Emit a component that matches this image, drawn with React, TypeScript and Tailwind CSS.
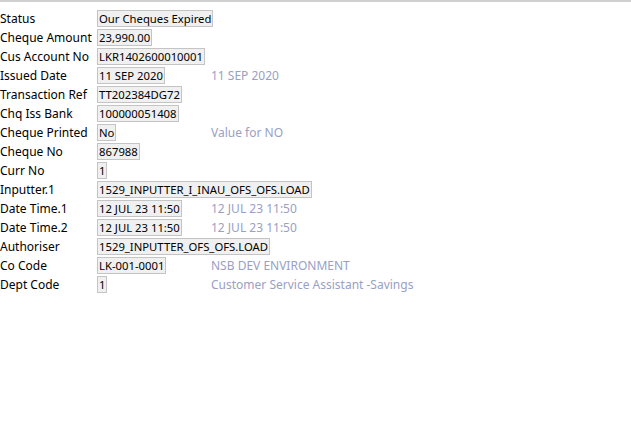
import React from 'react';

interface Field {
  label: string;
  value: string;
  desc?: string;
}

const fields: Field[] = [
  { label: 'Status', value: 'Our Cheques Expired' },
  { label: 'Cheque Amount', value: '23,990.00' },
  { label: 'Cus Account No', value: 'LKR1402600010001' },
  { label: 'Issued Date', value: '11 SEP 2020', desc: '11 SEP 2020' },
  { label: 'Transaction Ref', value: 'TT202384DG72' },
  { label: 'Chq Iss Bank', value: '100000051408' },
  { label: 'Cheque Printed', value: 'No', desc: 'Value for NO' },
  { label: 'Cheque No', value: '867988' },
  { label: 'Curr No', value: '1' },
  { label: 'Inputter.1', value: '1529_INPUTTER_I_INAU_OFS_OFS.LOAD' },
  { label: 'Date Time.1', value: '12 JUL 23 11:50', desc: '12 JUL 23 11:50' },
  { label: 'Date Time.2', value: '12 JUL 23 11:50', desc: '12 JUL 23 11:50' },
  { label: 'Authoriser', value: '1529_INPUTTER_OFS_OFS.LOAD' },
  { label: 'Co Code', value: 'LK-001-0001', desc: 'NSB DEV ENVIRONMENT' },
  { label: 'Dept Code', value: '1', desc: 'Customer Service Assistant -Savings' },
];

function App() {
  return (
    <div className="w-[631px] h-[424px] bg-white text-black text-[12px] font-['Noto_Sans',sans-serif]">
      <div className="h-[2px] bg-[#d0d0d0]" />
      <div className="pt-[8px] grid grid-cols-[97px_114px_1fr]">
        {fields.map((f) => (
          <React.Fragment key={f.label}>
            <div className="h-[19px] leading-[17px] whitespace-nowrap">{f.label}</div>
            <div className={`h-[19px] whitespace-nowrap ${f.desc ? '' : 'col-span-2'}`}>
              <span className="inline-block h-[17px] leading-[15px] text-[11.3px] px-[1px] bg-[#f0f0f0] border border-[#c4c4c4]">
                {f.value}
              </span>
            </div>
            {f.desc && (
              <div className="h-[19px] leading-[17px] whitespace-nowrap text-[#99a0c4]">{f.desc}</div>
            )}
          </React.Fragment>
        ))}
      </div>
    </div>
  );
}

export default App;
